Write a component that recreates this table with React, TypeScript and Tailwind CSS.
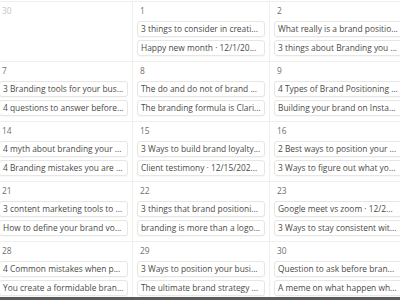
import React from 'react';

interface Day {
  label: string;
  faded?: boolean;
  items: string[];
}

const weeks: Day[][] = [
  [
    { label: '30', faded: true, items: [] },
    { label: '1', items: ['3 things to consider in creati...', 'Happy new month · 12/1/20...'] },
    { label: '2', items: ['What really is a brand positio...', '3 things about Branding you ...'] },
  ],
  [
    { label: '7', items: ['3 Branding tools for your bus...', '4 questions to answer before...'] },
    { label: '8', items: ['The do and do not of brand ...', 'The branding formula is Clari...'] },
    { label: '9', items: ['4 Types of Brand Positioning ...', 'Building your brand on Insta...'] },
  ],
  [
    { label: '14', items: ['4 myth about branding your ...', '4 Branding mistakes you are ...'] },
    { label: '15', items: ['3 Ways to build brand loyalty...', 'Client testimony · 12/15/202...'] },
    { label: '16', items: ['2 Best ways to position your ...', '3 Ways to figure out what yo...'] },
  ],
  [
    { label: '21', items: ['3 content marketing tools to ...', 'How to define your brand vo...'] },
    { label: '22', items: ['3 things that brand positioni...', 'branding is more than a logo...'] },
    { label: '23', items: ['Google meet vs zoom · 12/2...', '3 Ways to stay consistent wit...'] },
  ],
  [
    { label: '28', items: ['4 Common mistakes when p...', 'You create a formidable bran...'] },
    { label: '29', items: ['3 Ways to position your busi...', 'The ultimate brand strategy ...'] },
    { label: '30', items: ['Question to ask before bran...', 'A meme on what happen wh...'] },
  ],
];

function Cell({ day, first }: { day: Day; first: boolean }) {
  return (
    <div className={`h-[59px] px-[4px] pt-[3px] ${first ? '' : 'border-l border-[#efefee]'}`}>
      <div className={`h-[13px] pl-[3px] text-[8.4px] leading-[12px] ${day.faded ? 'text-[#c4c4c4]' : 'text-[#6f6f6f]'}`}>
        {day.label}
      </div>
      <div className="flex flex-col gap-[3px] pt-[3px]">
        {day.items.map((t) => (
          <div
            key={t}
            className="h-[16px] rounded-[3px] border border-[#e6e6e5] bg-white px-[3px] text-[8.4px] leading-[14px] text-[#4b4a47] whitespace-nowrap overflow-hidden shadow-[0_1px_1px_rgba(0,0,0,0.03)]"
          >
            {t}
          </div>
        ))}
      </div>
    </div>
  );
}

export default function App() {
  return (
    <div
      className="relative w-[400px] h-[300px] overflow-hidden bg-white"
      style={{ fontFamily: '"Open Sans", "Noto Sans", sans-serif' }}
    >
      <div className="w-[411px] -ml-[5px] pt-[1px]">
        {weeks.map((week, i) => (
          <div key={i} className="grid grid-cols-[137px_137px_137px] border-t border-[#efefee]">
            {week.map((day, j) => (
              <Cell key={j} day={day} first={j === 0} />
            ))}
          </div>
        ))}
      </div>
      <div className="absolute left-0 right-0 bottom-0 h-[3px] bg-[#5c5c5c]" />
    </div>
  );
}
